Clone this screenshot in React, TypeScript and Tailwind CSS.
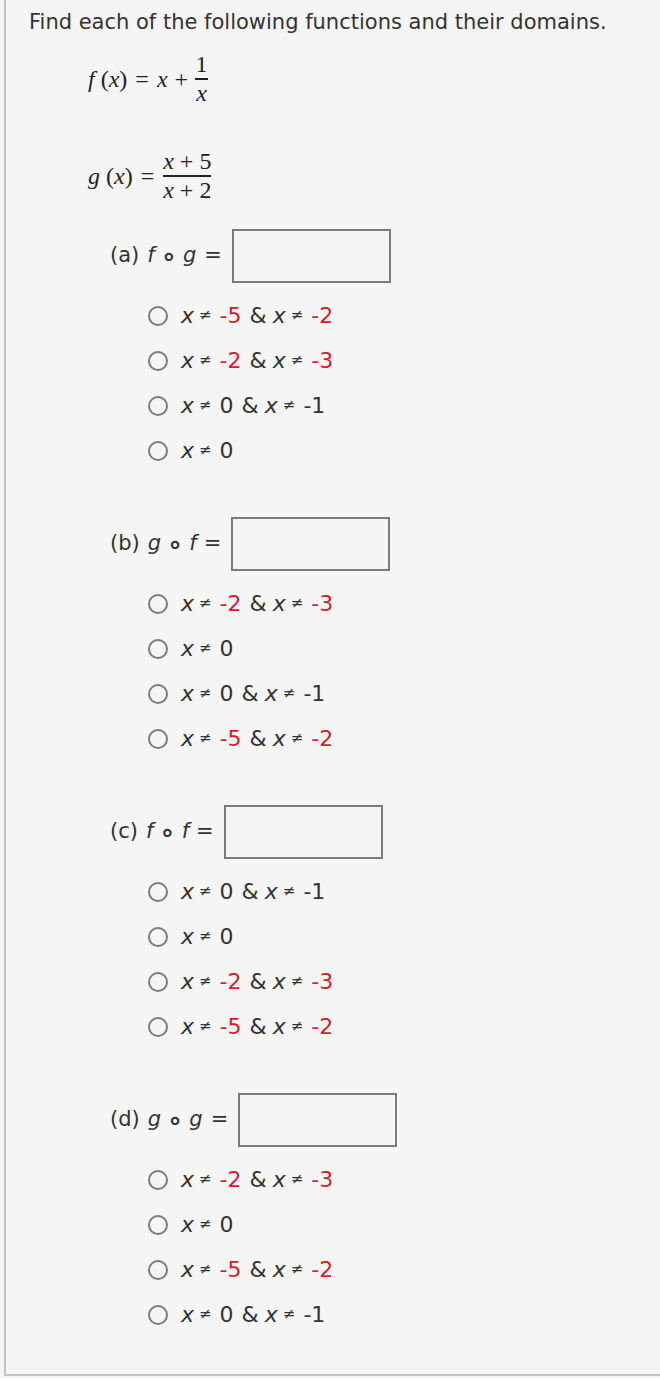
import React from "react";

type Part = { t: string; red?: boolean };
type Opt = Part[];

const ne = (a: string, b?: string): Opt => {
  const parts: Opt = [{ t: "x" }, { t: "≠" }, { t: a, red: a !== "0" && a !== "-1" }];
  if (b) parts.push({ t: "&" }, { t: "x" }, { t: "≠" }, { t: b, red: b !== "0" && b !== "-1" });
  return parts;
};

const SECTIONS = [
  { label: "(a)", left: "f", right: "g", gapEq: true, opts: [ne("-5", "-2"), ne("-2", "-3"), ne("0", "-1"), ne("0")] },
  { label: "(b)", left: "g", right: "f", gapEq: false, opts: [ne("-2", "-3"), ne("0"), ne("0", "-1"), ne("-5", "-2")] },
  { label: "(c)", left: "f", right: "f", gapEq: false, opts: [ne("0", "-1"), ne("0"), ne("-2", "-3"), ne("-5", "-2")] },
  { label: "(d)", left: "g", right: "g", gapEq: true, opts: [ne("-2", "-3"), ne("0"), ne("-5", "-2"), ne("0", "-1")] },
];

function Option({ parts }: { parts: Opt }) {
  return (
    <div className="flex h-[45px] items-center">
      <span className="h-[20px] w-[20px] rounded-full border-2 border-[#7b7b7b]" />
      <span className="ml-[13px] flex items-center text-[22px] leading-none">
        {parts.map((p, i) => {
          if (p.t === "x") return <i key={i} className="mr-[5px]">x</i>;
          if (p.t === "≠") return <span key={i} className="mr-[8px] text-[15px]">≠</span>;
          if (p.t === "&") return <span key={i} className="ml-[8px] mr-[6px]">&amp;</span>;
          return (
            <span key={i} className={p.red ? "text-[#d3202a]" : ""}>
              {p.t}
            </span>
          );
        })}
      </span>
    </div>
  );
}

function Frac({ num, den, w }: { num: React.ReactNode; den: React.ReactNode; w: string }) {
  return (
    <span className="inline-flex flex-col items-center">
      <span className="leading-[27px]">{num}</span>
      <span className={`h-[1.5px] bg-[#222] ${w}`} />
      <span className="leading-[27px]">{den}</span>
    </span>
  );
}

export default function App() {
  return (
    <div className="min-h-[1378px] bg-[#f5f5f5] pl-[4px] text-[#333]" style={{ fontFamily: '"DejaVu Sans", Verdana, sans-serif' }}>
      <div className="h-[1376px] border-b-2 border-l-2 border-[#c4c4c4]">
        <p className="pl-[23px] pt-[9px] text-[21px] leading-[26px]">
          Find each of the following functions and their domains.
        </p>

        {/* math */}
        <div className="ml-[82px] mt-[14px] text-[24px] text-[#222]" style={{ fontFamily: '"Liberation Serif", "Times New Roman", serif' }}>
          <div className="flex h-[60px] items-center">
            <i>f</i>
            <span className="ml-[6px]">(</span>
            <i>x</i>
            <span>)</span>
            <span className="mx-[8px]">=</span>
            <i>x</i>
            <span className="mx-[7px]">+</span>
            <Frac num="1" den={<i>x</i>} w="w-[13px]" />
          </div>
          <div className="mt-[37px] flex h-[60px] items-center">
            <i>g</i>
            <span className="ml-[6px]">(</span>
            <i>x</i>
            <span>)</span>
            <span className="ml-[8px] mr-[9px]">=</span>
            <Frac
              num={<span><i>x</i> + 5</span>}
              den={<span><i>x</i> + 2</span>}
              w="w-[48px]"
            />
          </div>
        </div>

        {/* parts */}
        <div className="ml-[104px] mt-[23px]">
          {SECTIONS.map((s, idx) => (
            <div key={s.label} className={idx === 0 ? "" : "mt-[44px]"}>
              <div className="flex h-[54px] items-center text-[21px]">
                <span>{s.label}</span>
                <i className="ml-[8px]">{s.left}</i>
                <span className="mx-[6px] text-[26px] font-bold leading-none">∘</span>
                <i>{s.right}</i>
                <span className={s.gapEq ? "ml-[8px]" : "ml-[7px]"}>=</span>
                <span className="ml-[10px] h-[54px] w-[159px] border-2 border-[#7b7b7b]" />
              </div>
              <div className="ml-[38px] mt-[10px]">
                {s.opts.map((o, i) => (
                  <Option key={i} parts={o} />
                ))}
              </div>
            </div>
          ))}
        </div>
      </div>
    </div>
  );
}
